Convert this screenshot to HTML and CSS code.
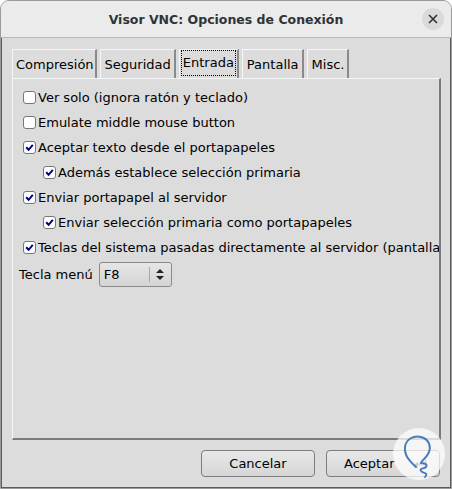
FILE: index.html
```html
<!DOCTYPE html>
<html>
<head>
<meta charset="utf-8">
<link rel="stylesheet" href="styles.css">
</head>
<body>
<div class="window">
  <div class="titlebar">
    <span class="title">Visor VNC: Opciones de Conexión</span>
    <span class="close">
      <svg width="10" height="10" viewBox="0 0 10 10"><path d="M1 1L9 9M9 1L1 9" stroke="#2e3436" stroke-width="1.6"/></svg>
    </span>
  </div>
  <div class="content">
    <div class="tabs">
      <div class="tab first">Compresión</div>
      <div class="tab">Seguridad</div>
      <div class="tab active"><span class="focus">Entrada</span></div>
      <div class="tab">Pantalla</div>
      <div class="tab">Misc.</div>
    </div>
    <div class="panel">
      <label class="row"><span class="cb"></span><span>Ver solo (ignora ratón y teclado)</span></label>
      <label class="row"><span class="cb"></span><span>Emulate middle mouse button</span></label>
      <label class="row"><span class="cb on"><svg viewBox="0 0 11 11"><path d="M2.2 5.2L4.6 7.8L8.8 2.8" fill="none" stroke="#000080" stroke-width="2"/></svg></span><span>Aceptar texto desde el portapapeles</span></label>
      <label class="row sub"><span class="cb on"><svg viewBox="0 0 11 11"><path d="M2.2 5.2L4.6 7.8L8.8 2.8" fill="none" stroke="#000080" stroke-width="2"/></svg></span><span>Además establece selección primaria</span></label>
      <label class="row"><span class="cb on"><svg viewBox="0 0 11 11"><path d="M2.2 5.2L4.6 7.8L8.8 2.8" fill="none" stroke="#000080" stroke-width="2"/></svg></span><span>Enviar portapapel al servidor</span></label>
      <label class="row sub"><span class="cb on"><svg viewBox="0 0 11 11"><path d="M2.2 5.2L4.6 7.8L8.8 2.8" fill="none" stroke="#000080" stroke-width="2"/></svg></span><span>Enviar selección primaria como portapapeles</span></label>
      <label class="row"><span class="cb on"><svg viewBox="0 0 11 11"><path d="M2.2 5.2L4.6 7.8L8.8 2.8" fill="none" stroke="#000080" stroke-width="2"/></svg></span><span class="nowrap">Teclas del sistema pasadas directamente al servidor (pantalla completa)</span></label>
      <div class="menurow">
        <span>Tecla menú</span>
        <div class="choice">
          <span class="val">F8</span>
          <span class="arrows"><svg width="8" height="11" viewBox="0 0 8 11"><path d="M4 0L8 4H0Z M0 7H8L4 11Z" fill="#222"/></svg></span>
        </div>
      </div>
    </div>
    <div class="buttons">
      <button class="btn">Cancelar</button>
      <button class="btn ret"><span>Aceptar</span>
        <svg class="retsym" width="16" height="12" viewBox="0 0 16 12"><path d="M13 1V7H3" fill="none" stroke="#333" stroke-width="1"/><path d="M1 7L5 4V10Z" fill="#333"/><path d="M14 1V8H4" fill="none" stroke="#fafafa" stroke-width="0.8"/></svg>
      </button>
    </div>
    <div class="watermark">
      <svg width="54" height="54" viewBox="0 0 54 54">
        <circle cx="27" cy="27" r="26" fill="rgba(255,255,255,0.72)"/>
        <path d="M24 40 C20 36 12 30 13 20 C14 12 22 8 29 10 C37 12 40 20 36 27 C34 31 30 33 29 36 C32 36 36 37 34 40 C32 42 27 41 29 44 C31 47 37 45 33 50" fill="none" stroke="#4a7bbd" stroke-width="2" stroke-linecap="round"/>
      </svg>
    </div>
  </div>
</div>
</body>
</html>
```
FILE: styles.css
```css
* { box-sizing: border-box; }
html, body { margin: 0; padding: 0; background: #ffffff; }
body { font-family: "DejaVu Sans", sans-serif; }

.window {
  width: 452px;
  height: 489px;
  border-radius: 9px 9px 0 0;
  overflow: hidden;
  display: flex;
  flex-direction: column;
  background: #dcdcdc;
  border: 1px solid #9a9a9a;
}

.titlebar {
  height: 37px;
  flex: none;
  background: #ebebeb;
  border-bottom: 1px solid #b8b8b8;
  display: flex;
  align-items: center;
  justify-content: center;
  position: relative;
}
.title {
  font-family: "DejaVu Sans", sans-serif;
  font-weight: bold;
  font-size: 12.5px;
  color: #2e3436;
  margin-top: 1px;
}
.close {
  position: absolute;
  right: 7px;
  top: 7px;
  width: 22px;
  height: 22px;
  border-radius: 50%;
  background: #dadada;
  display: flex;
  align-items: center;
  justify-content: center;
}

.content {
  flex: 1;
  position: relative;
  background: #dcdcdc;
  border-left: 1px solid #5c5c5c;
  border-right: 1px solid #5c5c5c;
  border-bottom: 1px solid #5c5c5c;
  padding: 11px 10px 0 10px;
  display: flex;
  flex-direction: column;
  font-size: 13px;
  color: #000;
}

.tabs {
  display: flex;
  gap: 3px;
  height: 29px;
}
.tab {
  height: 29px;
  padding: 0 3px 0 4px;
  border-left: 1px solid #f6f6f6;
  border-top: 1px solid #f6f6f6;
  border-right: 2px solid #8a8a8a;
  display: flex;
  align-items: center;
  font-size: 13px;
  color: #000;
}
.tab.first {
  padding: 0 1px 0 3px;
}
.tab.active {
  padding: 0 1px 0 1px;
}
.focus {
  border: 1px dotted #000;
  padding: 4px 1px 5px 1px;
  margin-top: -2px;
}

.panel {
  width: 429px;
  height: 362px;
  border-top: 1px solid #f6f6f6;
  border-left: 1px solid #f6f6f6;
  border-right: 2px solid #7a7a7a;
  border-bottom: 2px solid #7a7a7a;
  padding: 6px 0 0 10px;
  overflow: hidden;
  display: flex;
  flex-direction: column;
}

.row {
  display: flex;
  align-items: center;
  height: 25px;
  white-space: nowrap;
  gap: 2px;
}
.row.sub { padding-left: 20px; }
.cb {
  width: 13px;
  height: 13px;
  flex: none;
  border: 1px solid #777;
  border-radius: 3px;
  background: #ffffff;
  display: flex;
  align-items: center;
  justify-content: center;
}
.cb svg { width: 11px; height: 11px; }
.nowrap { white-space: nowrap; }

.menurow {
  display: flex;
  align-items: center;
  gap: 6px;
  margin-left: -4px;
  height: 29px;
}
.choice {
  width: 73px;
  height: 25px;
  border: 1px solid #8a8a8a;
  border-radius: 3px;
  background: linear-gradient(#e6e6e6, #d4d4d4);
  display: flex;
  align-items: center;
}
.choice .val {
  flex: 1;
  padding-left: 4px;
  border-right: 1px solid #a8a8a8;
  height: 15px;
  line-height: 15px;
}
.choice .arrows {
  width: 21px;
  display: flex;
  justify-content: center;
}

.buttons {
  display: flex;
  justify-content: flex-end;
  gap: 11px;
  margin-top: 10px;
}
.btn {
  width: 114px;
  height: 27px;
  font-family: "DejaVu Sans", sans-serif;
  font-size: 13px;
  color: #000;
  border: 1px solid #7d7d7d;
  border-radius: 4px;
  background: linear-gradient(#e8e8e8, #d6d6d6);
  padding: 0;
}
.btn.ret {
  display: flex;
  align-items: center;
  justify-content: space-between;
  padding: 0 10px 0 17px;
}
.retsym { flex: none; }

.watermark {
  position: absolute;
  right: 4px;
  bottom: 6px;
  width: 54px;
  height: 54px;
}
```
